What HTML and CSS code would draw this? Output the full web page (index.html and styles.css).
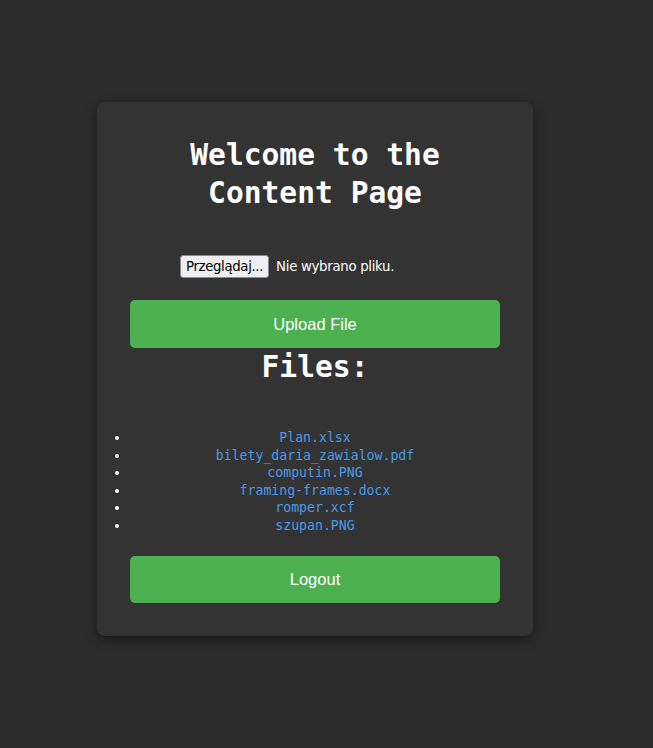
FILE: index.html
```html
<!DOCTYPE html>
<html lang="pl">
<head>
<meta charset="utf-8">
<title>Content Page</title>
<link rel="stylesheet" href="styles.css">
</head>
<body>
<main class="card">
  <h1 class="title">Welcome to the Content Page</h1>
  <form class="upload-form">
    <div class="file-row">
      <label class="file-btn">Przeglądaj...</label>
      <span class="file-status">Nie wybrano pliku.</span>
    </div>
    <button type="button" class="btn">Upload File</button>
  </form>
  <h2 class="files-title">Files:</h2>
  <ul class="file-list">
    <li><a href="#">Plan.xlsx</a></li>
    <li><a href="#">bilety_daria_zawialow.pdf</a></li>
    <li><a href="#">computin.PNG</a></li>
    <li><a href="#">framing-frames.docx</a></li>
    <li><a href="#">romper.xcf</a></li>
    <li><a href="#">szupan.PNG</a></li>
  </ul>
  <button type="button" class="btn">Logout</button>
</main>
</body>
</html>
```
FILE: styles.css
```css
html, body {
  margin: 0;
  padding: 0;
}
body {
  background: #2c2c2c;
  color: #ffffff;
  font-family: "DejaVu Sans Mono", "Liberation Mono", monospace;
  min-height: 748px;
  padding-top: 102px;
  box-sizing: border-box;
}
.card {
  width: 436px;
  margin: 0 0 0 97px;
  box-sizing: border-box;
  padding: 34px 33px 33px;
  background: #333333;
  border-radius: 8px;
  box-shadow: 0 4px 12px rgba(0, 0, 0, 0.45);
  text-align: center;
}
.title {
  margin: 0;
  font-size: 29.6px;
  line-height: 38px;
  font-weight: bold;
  color: #ffffff;
}
.upload-form {
  margin: 0;
}
.file-row {
  width: 270px;
  margin: 43px auto 0;
  display: flex;
  align-items: center;
  gap: 7px;
  height: 23px;
  font-family: "DejaVu Sans", "Liberation Sans", sans-serif;
  font-size: 13.3px;
}
.file-btn {
  display: inline-flex;
  align-items: center;
  height: 23px;
  box-sizing: border-box;
  padding: 0 5px;
  background: #efeff3;
  color: #000000;
  border: 1px solid #8a8a8a;
  border-radius: 3px;
  font-size: 13.3px;
  letter-spacing: -0.35px;
}
.file-status {
  color: #ffffff;
  letter-spacing: -0.3px;
}
.btn {
  display: block;
  width: 100%;
  height: 48px;
  margin: 22px 0 0;
  border: none;
  border-radius: 5px;
  background: #4caf50;
  color: #ffffff;
  font-family: "Liberation Sans", Arial, sans-serif;
  font-size: 16.5px;
  cursor: pointer;
}
.files-title {
  margin: 0;
  font-size: 29.6px;
  line-height: 38px;
  font-weight: bold;
  color: #ffffff;
}
.file-list {
  margin: 43px 0 0;
  padding: 0;
  text-align: center;
  font-size: 13.2px;
  line-height: 17.6px;
}
.file-list li {
  color: #ffffff;
}
.file-list a {
  color: #4a9ae8;
  text-decoration: none;
}
.file-list + .btn {
  margin-top: 21px;
  height: 47px;
}
```
